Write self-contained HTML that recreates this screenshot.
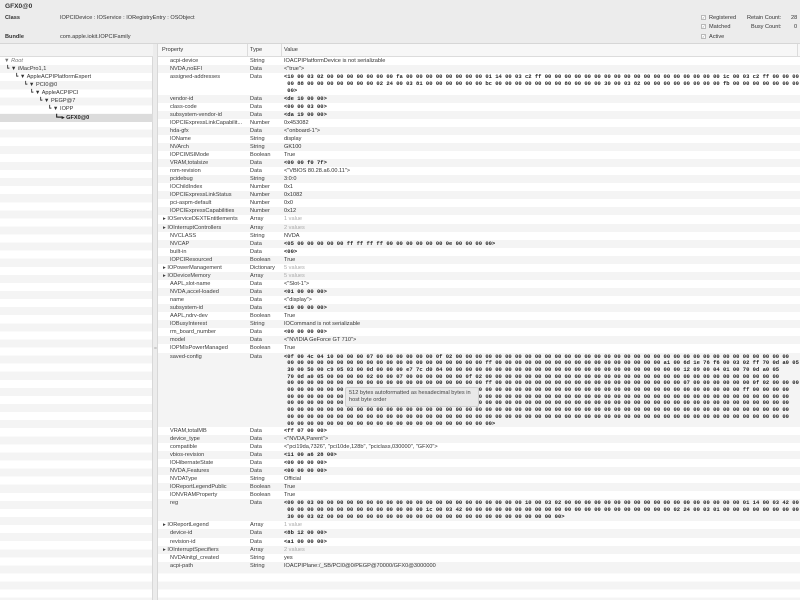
<!DOCTYPE html>
<html><head><meta charset="utf-8">
<style>
*{margin:0;padding:0;box-sizing:border-box}
body{width:800px;height:600px;overflow:hidden;background:#fff;font-family:"Liberation Sans",sans-serif;font-size:5.6px;color:#333;position:relative}
#top{position:absolute;left:0;top:0;width:800px;height:44px;background:#ececec;border-bottom:1px solid #d6d6d6}
.t{position:absolute;white-space:nowrap}
#left{position:absolute;left:0;top:44px;width:153px;height:556px;background:repeating-linear-gradient(#fff 0 8.07px,#f4f4f4 8.07px 16.14px);background-position:0 13px;border-right:1px solid #d8d8d8}
#lh{position:absolute;left:0;top:0;width:153px;height:13px;background:#f3f3f3;border-bottom:1px solid #dcdcdc}
#split{position:absolute;left:153px;top:44px;width:5px;height:556px;background:#ececec;border-right:1px solid #d8d8d8}
#right{position:absolute;left:158px;top:44px;width:642px;height:556px;background:repeating-linear-gradient(#fff 0 8.07px,#f4f4f4 8.07px 16.14px);background-position:0 13px;overflow:hidden}
#rh{position:absolute;left:0;top:0;width:642px;height:13px;background:#f7f7f7;border-bottom:1px solid #dcdcdc}
.lr{position:absolute;left:0;width:153px;height:8.07px;line-height:8.07px;white-space:nowrap}
#rows{position:absolute;left:0;top:13px;width:642px}
.r{display:flex;height:8.07px;line-height:8.07px;white-space:nowrap}
.r:nth-child(odd){background:#fff}.r:nth-child(even){background:#f4f4f4}
.p{width:89px;padding-left:12px;overflow:hidden;color:#3a3a3a}
.p.x{padding-left:5px}
.ty{width:34px;padding-left:3px;color:#3a3a3a}
.v{flex:1;padding-left:3px;overflow:hidden}
.m{font-family:"Liberation Mono",monospace;font-weight:bold;font-size:5.5px;color:#222}
.g{color:#aaa}
.hx{white-space:pre;font-family:"Liberation Mono",monospace;font-weight:bold;font-size:5.5px;color:#222;line-height:6.7px;padding-top:1px;overflow:hidden}
.cb{display:inline-block;width:5px;height:5px;border:0.5px solid #b8b8b8;background:#fff;font-size:4px;line-height:4px;text-align:center;color:#777;vertical-align:middle;margin-right:3px}
</style></head><body>
<div id="top">
<div class="t" style="left:5px;top:3px;font-weight:bold;font-size:6.6px">GFX0@0</div>
<div class="t" style="left:5px;top:15px;font-weight:bold">Class</div>
<div class="t" style="left:60px;top:15px">IOPCIDevice : IOService : IORegistryEntry : OSObject</div>
<div class="t" style="left:5px;top:34px;font-weight:bold">Bundle</div>
<div class="t" style="left:60px;top:34px">com.apple.iokit.IOPCIFamily</div>
<div class="t" style="left:701px;top:15px"><span class="cb">✓</span>Registered</div>
<div class="t" style="left:701px;top:24px"><span class="cb">✓</span>Matched</div>
<div class="t" style="left:701px;top:34px"><span class="cb">✓</span>Active</div>
<div class="t" style="left:747px;top:15px">Retain Count:</div>
<div class="t" style="left:791px;top:15px">28</div>
<div class="t" style="left:751px;top:24px">Busy Count:</div>
<div class="t" style="left:794px;top:24px">0</div>
</div>
<div id="left">
<div id="lh"></div>
<div class="lr" style="top:13px;padding-left:4px"><span style="color:#777">▼</span> <i style="color:#777">Root</i></div>
<div class="lr" style="top:21.07px;padding-left:6px">┗ ▼ iMacPro1,1</div>
<div class="lr" style="top:29.14px;padding-left:15px">┗ ▼ AppleACPIPlatformExpert</div>
<div class="lr" style="top:37.2px;padding-left:24px">┗ ▼ PCI0@0</div>
<div class="lr" style="top:45.3px;padding-left:30px">┗ ▼ AppleACPIPCI</div>
<div class="lr" style="top:53.35px;padding-left:39px">┗ ▼ PEGP@7</div>
<div class="lr" style="top:61.4px;padding-left:48px">┗ ▼ IOPP</div>
<div class="lr" style="top:69.5px;padding-left:55px;background:#dcdcdc;font-weight:bold;color:#222">┗━▸ GFX0@0</div>
</div>
<div id="split"><div style="position:absolute;left:1px;top:302px;color:#aaa;font-size:5px">=</div></div>
<div id="right">
<div id="rh">
<div class="t" style="left:4px;top:3px">Property</div>
<div class="t" style="left:89px;top:0;width:1px;height:13px;background:#dcdcdc"></div>
<div class="t" style="left:92px;top:3px">Type</div>
<div class="t" style="left:123px;top:0;width:1px;height:13px;background:#dcdcdc"></div>
<div class="t" style="left:126px;top:3px">Value</div>
<div class="t" style="left:639px;top:0;width:1px;height:13px;background:#dcdcdc"></div>
</div>
<div id="rows">
<div class="r"><div class="p">acpi-device</div><div class="ty">String</div><div class="v">IOACPIPlatformDevice is not serializable</div></div>
<div class="r"><div class="p">NVDA,noEFI</div><div class="ty">Data</div><div class="v">&lt;"true"&gt;</div></div>
<div class="r" style="height:21.4px"><div class="p">assigned-addresses</div><div class="ty">Data</div><div class="v hx">&lt;10 00 03 02 00 00 00 00 00 00 00 fa 00 00 00 00 00 00 00 00 01 14 00 03 c2 ff 00 00 00 00 00 00 00 00 00 00 00 00 00 00 00 00 00 00 1c 00 03 c2 ff 00 00 00 00 00
 00 88 00 00 00 00 00 00 00 02 24 00 03 81 00 00 00 00 00 00 bc 00 00 00 00 00 00 00 80 00 00 00 30 00 03 82 00 00 00 00 00 00 00 00 fb 00 00 00 00 00 00 00
 00&gt;</div></div>
<div class="r"><div class="p">vendor-id</div><div class="ty">Data</div><div class="v m">&lt;de 10 00 00&gt;</div></div>
<div class="r"><div class="p">class-code</div><div class="ty">Data</div><div class="v m">&lt;00 00 03 00&gt;</div></div>
<div class="r"><div class="p">subsystem-vendor-id</div><div class="ty">Data</div><div class="v m">&lt;da 19 00 00&gt;</div></div>
<div class="r"><div class="p">IOPCIExpressLinkCapabilit...</div><div class="ty">Number</div><div class="v">0x453082</div></div>
<div class="r"><div class="p">hda-gfx</div><div class="ty">Data</div><div class="v">&lt;"onboard-1"&gt;</div></div>
<div class="r"><div class="p">IOName</div><div class="ty">String</div><div class="v">display</div></div>
<div class="r"><div class="p">NVArch</div><div class="ty">String</div><div class="v">GK100</div></div>
<div class="r"><div class="p">IOPCIMSIMode</div><div class="ty">Boolean</div><div class="v">True</div></div>
<div class="r"><div class="p">VRAM,totalsize</div><div class="ty">Data</div><div class="v m">&lt;00 00 f0 7f&gt;</div></div>
<div class="r"><div class="p">rom-revision</div><div class="ty">Data</div><div class="v">&lt;"VBIOS 80.28.a6.00.11"&gt;</div></div>
<div class="r"><div class="p">pcidebug</div><div class="ty">String</div><div class="v">3:0:0</div></div>
<div class="r"><div class="p">IOChildIndex</div><div class="ty">Number</div><div class="v">0x1</div></div>
<div class="r"><div class="p">IOPCIExpressLinkStatus</div><div class="ty">Number</div><div class="v">0x1082</div></div>
<div class="r"><div class="p">pci-aspm-default</div><div class="ty">Number</div><div class="v">0x0</div></div>
<div class="r"><div class="p">IOPCIExpressCapabilities</div><div class="ty">Number</div><div class="v">0x12</div></div>
<div class="r"><div class="p x">▸ IOServiceDEXTEntitlements</div><div class="ty">Array</div><div class="v g">1 value</div></div>
<div class="r"><div class="p x">▸ IOInterruptControllers</div><div class="ty">Array</div><div class="v g">2 values</div></div>
<div class="r"><div class="p">NVCLASS</div><div class="ty">String</div><div class="v">NVDA</div></div>
<div class="r"><div class="p">NVCAP</div><div class="ty">Data</div><div class="v m">&lt;05 00 00 00 00 00 ff ff ff ff 00 00 00 00 00 00 0e 00 00 00 00&gt;</div></div>
<div class="r"><div class="p">built-in</div><div class="ty">Data</div><div class="v m">&lt;00&gt;</div></div>
<div class="r"><div class="p">IOPCIResourced</div><div class="ty">Boolean</div><div class="v">True</div></div>
<div class="r"><div class="p x">▸ IOPowerManagement</div><div class="ty">Dictionary</div><div class="v g">5 values</div></div>
<div class="r"><div class="p x">▸ IODeviceMemory</div><div class="ty">Array</div><div class="v g">5 values</div></div>
<div class="r"><div class="p">AAPL,slot-name</div><div class="ty">Data</div><div class="v">&lt;"Slot-1"&gt;</div></div>
<div class="r"><div class="p">NVDA,accel-loaded</div><div class="ty">Data</div><div class="v m">&lt;01 00 00 00&gt;</div></div>
<div class="r"><div class="p">name</div><div class="ty">Data</div><div class="v">&lt;"display"&gt;</div></div>
<div class="r"><div class="p">subsystem-id</div><div class="ty">Data</div><div class="v m">&lt;10 00 00 00&gt;</div></div>
<div class="r"><div class="p">AAPL,ndrv-dev</div><div class="ty">Boolean</div><div class="v">True</div></div>
<div class="r"><div class="p">IOBusyInterest</div><div class="ty">String</div><div class="v">IOCommand is not serializable</div></div>
<div class="r"><div class="p">rm_board_number</div><div class="ty">Data</div><div class="v m">&lt;00 00 00 00&gt;</div></div>
<div class="r"><div class="p">model</div><div class="ty">Data</div><div class="v">&lt;"NVIDIA GeForce GT 710"&gt;</div></div>
<div class="r"><div class="p">IOPMIsPowerManaged</div><div class="ty">Boolean</div><div class="v">True</div></div>
<div class="r" style="height:74.3px"><div class="p">saved-config</div><div class="ty">Data</div><div class="v hx">&lt;0f 00 4c 04 10 00 00 00 07 00 00 00 00 00 00 0f 02 00 00 00 00 00 00 00 00 00 00 00 00 00 00 00 00 00 00 00 00 00 00 00 00 00 00 00 00 00 00 00 00 00 00
 00 00 00 00 00 00 00 00 00 00 00 00 00 00 00 00 00 00 00 00 ff 00 00 00 00 00 00 00 00 00 00 00 00 00 00 00 00 00 a1 00 6d 1e 76 f6 00 03 02 ff 70 0d a0 05 10 0e
 30 00 50 00 c9 05 03 00 0d 00 00 00 e7 7c d0 84 00 00 00 00 00 00 00 00 00 00 00 00 00 00 00 00 00 00 00 00 00 00 00 00 12 09 00 04 01 00 70 0d a0 05
 70 0d a0 05 00 00 00 00 02 00 00 07 00 00 00 00 00 00 0f 02 00 00 00 00 00 00 00 00 00 00 00 00 00 00 00 00 00 00 00 00 00 00 00 00 00 00 00 00 00 00
 00 00 00 00 00 00 00 00 00 00 00 00 00 00 00 00 00 00 00 00 ff 00 00 00 00 00 00 00 00 00 00 00 00 00 00 00 00 00 00 00 07 00 00 00 00 00 00 0f 02 00 00 00 00
 00 00 00 00 00 00 00 00 00 00 00 00 00 00 00 00 00 00 00 00 00 00 00 00 00 00 00 00 00 00 00 00 00 00 00 00 00 00 00 00 00 00 00 00 00 00 ff 00 00 00 00
 00 00 00 00 00 00 00 00 00 00 00 00 00 00 00 00 00 00 00 00 00 00 00 00 00 00 00 00 00 00 00 00 00 00 00 00 00 00 00 00 00 00 00 00 00 00 00 00 00 00 00
 00 00 00 00 00 00 00 00 00 00 00 00 00 00 00 00 00 00 00 00 00 00 00 00 00 00 00 00 00 00 00 00 00 00 00 00 00 00 00 00 00 00 00 00 00 00 00 00 00 00 00
 00 00 00 00 00 00 00 00 00 00 00 00 00 00 00 00 00 00 00 00 00 00 00 00 00 00 00 00 00 00 00 00 00 00 00 00 00 00 00 00 00 00 00 00 00 00 00 00 00 00 00
 00 00 00 00 00 00 00 00 00 00 00 00 00 00 00 00 00 00 00 00 00 00 00 00 00 00 00 00 00 00 00 00 00 00 00 00 00 00 00 00 00 00 00 00 00 00 00 00 00 00 00
 00 00 00 00 00 00 00 00 00 00 00 00 00 00 00 00 00 00 00 00 00&gt;</div></div>
<div class="r"><div class="p">VRAM,totalMB</div><div class="ty">Data</div><div class="v m">&lt;ff 07 00 00&gt;</div></div>
<div class="r"><div class="p">device_type</div><div class="ty">Data</div><div class="v">&lt;"NVDA,Parent"&gt;</div></div>
<div class="r"><div class="p">compatible</div><div class="ty">Data</div><div class="v">&lt;"pci19da,7326", "pci10de,128b", "pciclass,030000", "GFX0"&gt;</div></div>
<div class="r"><div class="p">vbios-revision</div><div class="ty">Data</div><div class="v m">&lt;11 00 a6 28 00&gt;</div></div>
<div class="r"><div class="p">IOHibernateState</div><div class="ty">Data</div><div class="v m">&lt;00 00 00 00&gt;</div></div>
<div class="r"><div class="p">NVDA,Features</div><div class="ty">Data</div><div class="v m">&lt;00 00 00 00&gt;</div></div>
<div class="r"><div class="p">NVDAType</div><div class="ty">String</div><div class="v">Official</div></div>
<div class="r"><div class="p">IOReportLegendPublic</div><div class="ty">Boolean</div><div class="v">True</div></div>
<div class="r"><div class="p">IONVRAMProperty</div><div class="ty">Boolean</div><div class="v">True</div></div>
<div class="r" style="height:22px"><div class="p">reg</div><div class="ty">Data</div><div class="v hx">&lt;00 00 03 00 00 00 00 00 00 00 00 00 00 00 00 00 00 00 00 00 00 00 00 00 10 00 03 02 00 00 00 00 00 00 00 00 00 00 00 00 00 00 00 00 00 00 01 14 00 03 42 00 00
 00 00 00 00 00 00 00 00 00 00 00 00 00 00 1c 00 03 42 00 00 00 00 00 00 00 00 00 00 00 00 00 00 00 00 00 00 00 00 00 02 24 00 03 01 00 00 00 00 00 00 00 00
 30 00 03 02 00 00 00 00 00 00 00 00 00 00 00 00 00 00 00 00 00 00 00 00 00 00 00 00&gt;</div></div>
<div class="r"><div class="p x">▸ IOReportLegend</div><div class="ty">Array</div><div class="v g">1 value</div></div>
<div class="r"><div class="p">device-id</div><div class="ty">Data</div><div class="v m">&lt;8b 12 00 00&gt;</div></div>
<div class="r"><div class="p">revision-id</div><div class="ty">Data</div><div class="v m">&lt;a1 00 00 00&gt;</div></div>
<div class="r"><div class="p x">▸ IOInterruptSpecifiers</div><div class="ty">Array</div><div class="v g">2 values</div></div>
<div class="r"><div class="p">NVDAinitgl_created</div><div class="ty">String</div><div class="v">yes</div></div>
<div class="r"><div class="p">acpi-path</div><div class="ty">String</div><div class="v">IOACPIPlane:/_SB/PCI0@0/PEGP@70000/GFX0@3000000</div></div>
</div>
<div class="t" style="left:187px;top:343px;width:134px;height:20px;background:#e9e9e9;border:0.5px solid #cfcfcf;border-radius:2px;padding:2px 3px;line-height:7px;color:#444;white-space:normal">512 bytes autoformatted as hexadecimal bytes in host byte order</div>
</div>
</body></html>
